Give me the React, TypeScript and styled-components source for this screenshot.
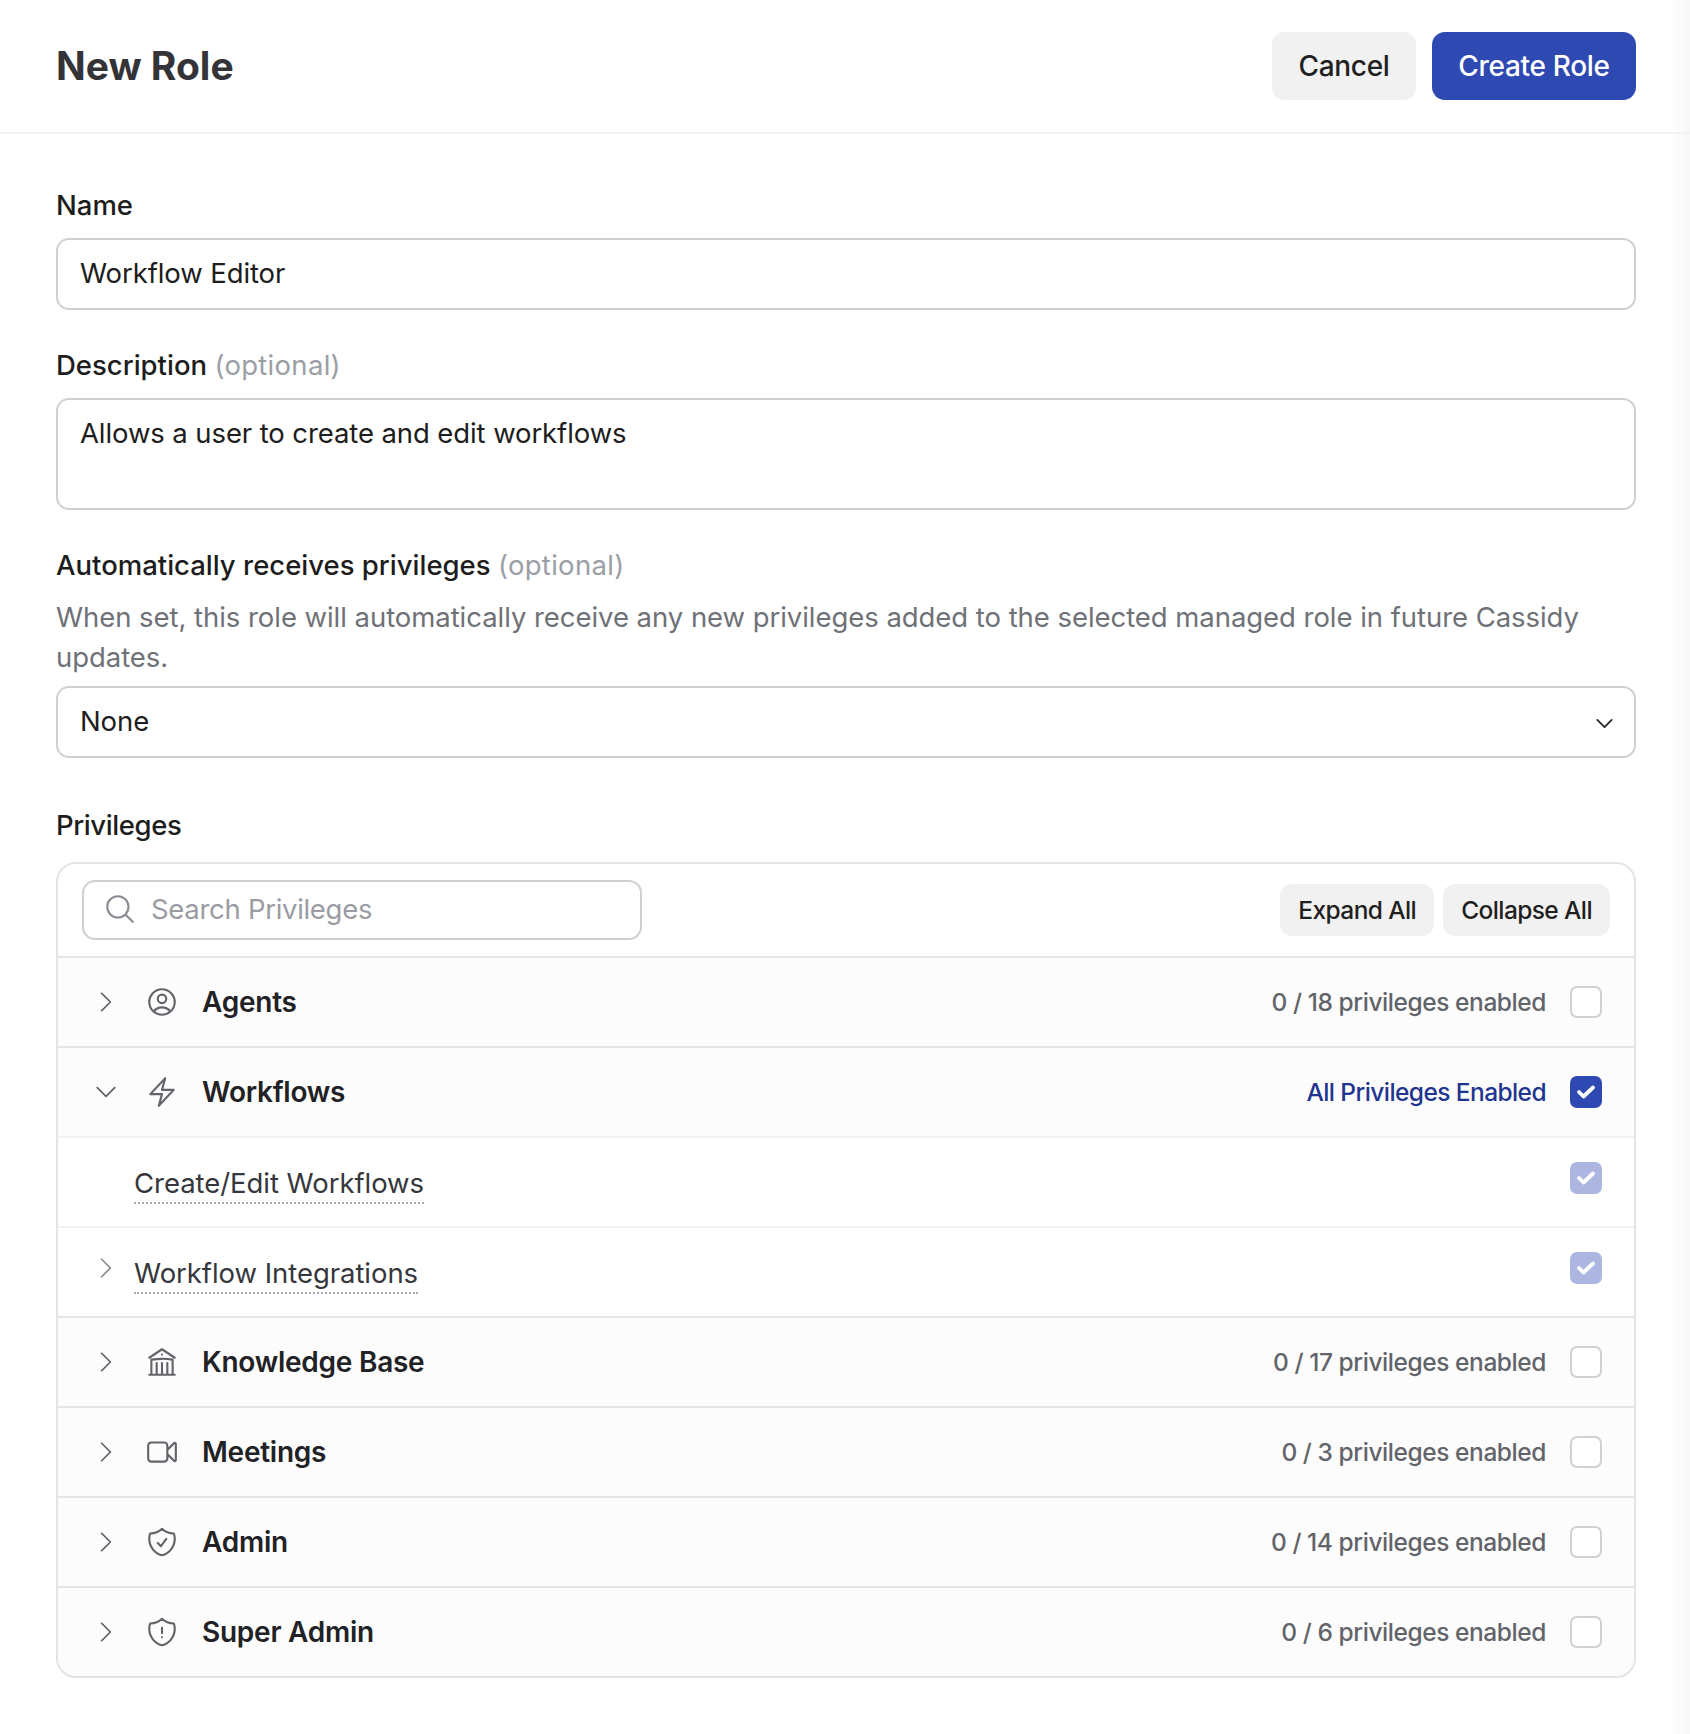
import React from 'react'
import styled, { createGlobalStyle } from 'styled-components'
import {
	HiOutlineBolt,
	HiOutlineBuildingLibrary,
	HiOutlineChevronDown,
	HiOutlineChevronRight,
	HiOutlineMagnifyingGlass,
	HiOutlineShieldCheck,
	HiOutlineShieldExclamation,
	HiOutlineUserCircle,
	HiOutlineVideoCamera,
} from 'react-icons/hi2'

const GlobalStyle = createGlobalStyle`
  html, body {
    margin: 0;
    padding: 0;
    background: #fff;
  }
  body {
    font-family: Inter, "Liberation Sans", sans-serif;
    color: #1d1d20;
  }
  * {
    box-sizing: border-box;
  }
`

const CheckMark = () => (
	<svg width='20' height='20' viewBox='0 0 20 20' fill='none'>
		<path d='M3 10 L7.5 14.5 L17 5.5' stroke='#fff' strokeWidth='3.8' strokeLinecap='round' strokeLinejoin='round'/>
	</svg>
)

const groups = [
	{ name: 'Agents', Icon: HiOutlineUserCircle, status: '0 / 18 privileges enabled' },
	{ name: 'Workflows', Icon: HiOutlineBolt, open: true },
	{ name: 'Knowledge Base', Icon: HiOutlineBuildingLibrary, status: '0 / 17 privileges enabled' },
	{ name: 'Meetings', Icon: HiOutlineVideoCamera, status: '0 / 3 privileges enabled' },
	{ name: 'Admin', Icon: HiOutlineShieldCheck, status: '0 / 14 privileges enabled' },
	{ name: 'Super Admin', Icon: HiOutlineShieldExclamation, status: '0 / 6 privileges enabled' },
]

const App = () => {
	return (
		<Page>
			<GlobalStyle/>
			<Header>
				<Title>New Role</Title>
				<HeaderActions>
					<GhostButton>Cancel</GhostButton>
					<PrimaryButton>Create Role</PrimaryButton>
				</HeaderActions>
			</Header>

			<Content>
				<Label>Name</Label>
				<Field>Workflow Editor</Field>

				<Label $top={ 37 }>Description <Optional>(optional)</Optional></Label>
				<TextArea>Allows a user to create and edit workflows</TextArea>

				<Label $top={ 37 }>Automatically receives privileges <Optional>(optional)</Optional></Label>
				<Help>When set, this role will automatically receive any new privileges added to the selected managed role in future Cassidy updates.</Help>
				<SelectField>
					None
					<SelectChevron size={ 23 }/>
				</SelectField>

				<PrivilegesLabel $top={ 49 }>Privileges</PrivilegesLabel>
				<Card>
					<Toolbar>
						<SearchBox>
							<HiOutlineMagnifyingGlass size={ 34 } color='#8b8c93'/>
							Search Privileges
						</SearchBox>
						<ToolbarActions>
							<SmallButton>Expand All</SmallButton>
							<SmallButton>Collapse All</SmallButton>
						</ToolbarActions>
					</Toolbar>

					{ groups.map(({ name, Icon, status, open }) => (
						<React.Fragment key={ name }>
							<GroupRow>
								<Chevron>
									{ open ? <HiOutlineChevronDown size={ 28 }/> : <HiOutlineChevronRight size={ 28 }/> }
								</Chevron>
								<GroupIcon><Icon size={ 34 }/></GroupIcon>
								<GroupName>{ name }</GroupName>
								<Status $active={ open }>{ status || 'All Privileges Enabled' }</Status>
								<Checkbox $state={ open ? 'on' : 'off' }>{ open && <CheckMark/> }</Checkbox>
							</GroupRow>
							{ open && (
								<>
									<SubRow>
										<SubChevron/>
										<SubName>Create/Edit Workflows</SubName>
										<SubCheck $state='dim'><CheckMark/></SubCheck>
									</SubRow>
									<SubRow>
										<SubChevron><HiOutlineChevronRight size={ 28 }/></SubChevron>
										<SubName>Workflow Integrations</SubName>
										<SubCheck $state='dim'><CheckMark/></SubCheck>
									</SubRow>
								</>
							) }
						</React.Fragment>
					)) }
				</Card>
			</Content>
		</Page>
	)
}

export default App

const Page = styled.div`
  min-height: 1734px;
  background: linear-gradient(90deg, #fff calc(100% - 22px), #f7f7f7 100%);
`

const Header = styled.header`
  display: flex;
  align-items: center;
  justify-content: space-between;
  height: 134px;
  padding: 0 54px 0 56px;
  border-bottom: 2px solid #f2f2f3;
`

const Title = styled.h1`
  margin: 0;
  padding-bottom: 2px;
  font-size: 39px;
  font-weight: 700;
  color: #333338;
`

const HeaderActions = styled.div`
  display: flex;
  gap: 16px;
`

const BaseButton = styled.button`
  display: flex;
  align-items: center;
  justify-content: center;
  height: 68px;
  border: 0;
  border-radius: 13px;
  font-family: inherit;
  font-size: 28px;
  font-weight: 500;
  letter-spacing: -0.3px;
`

const GhostButton = styled(BaseButton)`
  width: 144px;
  background: #f1f1f1;
  color: #1f1f22;
`

const PrimaryButton = styled(BaseButton)`
  width: 204px;
  background: #2e49b1;
  color: #fff;
`

const Content = styled.main`
  padding: 53px 54px 0 56px;
`

const Label = styled.div<{ $top?: number }>`
  margin-top: ${ p => p.$top || 0 }px;
  font-size: 27.5px;
  line-height: 36px;
  font-weight: 500;
  color: #1d1d20;
`

const PrivilegesLabel = styled(Label)`
  letter-spacing: -0.4px;
`

const Optional = styled.span`
  font-weight: 400;
  letter-spacing: 0.3px;
  color: #9c9ea6;
`

const Field = styled.div`
  display: flex;
  align-items: center;
  height: 72px;
  margin-top: 15px;
  padding: 0 22px 2px;
  border: 2px solid #cfcfd6;
  border-radius: 13px;
  font-size: 27.5px;
  letter-spacing: -0.1px;
  color: #1d1d20;
`

const TextArea = styled(Field)`
  align-items: flex-start;
  height: 112px;
  padding-top: 16px;
`

const Help = styled.p`
  margin: 14px 0 0;
  font-size: 27.5px;
  line-height: 40px;
  letter-spacing: -0.05px;
  color: #6f7177;
`

const SelectField = styled(Field)`
  justify-content: space-between;
  margin-top: 9px;
  padding-right: 18px;
`

const SelectChevron = styled(HiOutlineChevronDown)`
  margin-top: 4px;
  color: #2a2a2e;
  stroke-width: 2;
`

const Card = styled.section`
  margin-top: 19px;
  border: 2px solid #e3e3e8;
  border-radius: 20px;
  overflow: hidden;
`

const Toolbar = styled.div`
  display: flex;
  align-items: center;
  justify-content: space-between;
  height: 92px;
  padding: 0 24px;
`

const SearchBox = styled.div`
  display: flex;
  align-items: center;
  gap: 14px;
  width: 560px;
  height: 60px;
  padding: 0 0 2px 19px;
  border: 2px solid #cfcfd6;
  border-radius: 13px;
  font-size: 27.5px;
  letter-spacing: -0.3px;
  color: #9b9ca3;
`

const ToolbarActions = styled.div`
  display: flex;
  gap: 9px;
`

const SmallButton = styled.button`
  height: 52px;
  padding: 0 18px;
  border: 0;
  border-radius: 12px;
  background: #f1f1f1;
  font-family: inherit;
  font-size: 24.5px;
  font-weight: 500;
  letter-spacing: -0.6px;
  color: #1f1f22;
`

const GroupRow = styled.div`
  display: flex;
  align-items: center;
  height: 90px;
  padding: 0 32px 0 34px;
  border-top: 2px solid #e3e3e8;
  background: #fcfcfc;
`

const Chevron = styled.span`
  display: flex;
  width: 28px;
  color: #5f6168;
`

const GroupIcon = styled.span`
  display: flex;
  margin-left: 25px;
  color: #62646a;
`

const GroupName = styled.span`
  margin-left: 23px;
  font-size: 28px;
  font-weight: 600;
  letter-spacing: -0.25px;
  color: #222226;
`

const Status = styled.span<{ $active?: boolean }>`
  margin-left: auto;
  font-size: 24.5px;
  font-weight: 500;
  letter-spacing: ${ p => p.$active ? '-0.58px' : '-0.43px' };
  color: ${ p => p.$active ? '#1f3590' : '#62646a' };
`

const Checkbox = styled.span<{ $state: 'on' | 'off' | 'dim' }>`
  display: flex;
  align-items: center;
  justify-content: center;
  width: 32px;
  height: 32px;
  margin-left: 24px;
  border-radius: 7px;
  border: ${ p => p.$state === 'off' ? '2px solid #d0d0d5' : '0' };
  background: ${ p => p.$state === 'on' ? '#2e49b1' : p.$state === 'dim' ? '#acb6e0' : '#fff' };
`

const SubRow = styled.div`
  display: flex;
  align-items: center;
  height: 90px;
  padding: 0 32px 0 34px;
  border-top: 2px solid #f1f1f3;
  background: #fff;
`

const SubChevron = styled(Chevron)`
  height: 28px;
  margin-bottom: 8px;
  color: #8a8c93;
`

const SubName = styled.span`
  margin: 6px 0 0 14px;
  padding-bottom: 2px;
  border-bottom: 2px dotted #a9aab1;
  font-size: 27.5px;
  letter-spacing: -0.05px;
  color: #36373c;
`

const SubCheck = styled(Checkbox)`
  margin-left: auto;
  margin-bottom: 8px;
`
